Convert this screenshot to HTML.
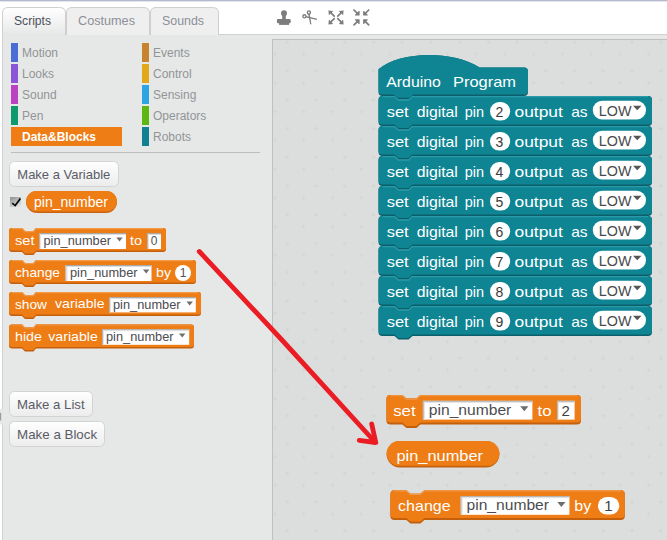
<!DOCTYPE html>
<html><head><meta charset="utf-8">
<style>
html,body{margin:0;padding:0;width:667px;height:540px;overflow:hidden;background:#fff;}
svg{display:block;font-family:"Liberation Sans",sans-serif;}
</style></head><body>
<svg width="667" height="540" viewBox="0 0 667 540">
<defs>
  <linearGradient id="tabA" x1="0" y1="0" x2="0" y2="1">
    <stop offset="0" stop-color="#ffffff"/><stop offset="1" stop-color="#e6e8e7"/>
  </linearGradient>
  <linearGradient id="chk" x1="0" y1="0" x2="0.6" y2="1">
    <stop offset="0" stop-color="#8e8e8e"/><stop offset="1" stop-color="#dedede"/>
  </linearGradient>
  <linearGradient id="btn" x1="0" y1="0" x2="0" y2="1">
    <stop offset="0" stop-color="#ffffff"/><stop offset="1" stop-color="#ececec"/>
  </linearGradient>
  <pattern id="grid" patternUnits="userSpaceOnUse" x="0" y="0" width="28.73" height="28.73">
    <g stroke="#d3d5d5" stroke-width="1" fill="none">
      <path d="M-2 13.5h4M0 11.5v4M26.73 13.5h4M28.73 11.5v4"/>
      <path d="M14.5 25.5h4M16.5 23.5v4M14.5 -3.23h4M16.5 -5.23v4"/>
    </g>
  </pattern>
</defs>

<!-- top line -->
<rect x="0" y="0" width="667" height="1" fill="#b4b9cb"/>
<rect x="0" y="1" width="667" height="1" fill="#e3e5ec"/>

<!-- palette bg -->
<rect x="2" y="34" width="665" height="506" fill="#e6e8e7"/>
<rect x="2" y="34" width="665" height="1" fill="#cfd0d1"/>
<rect x="2" y="34" width="1" height="506" fill="#cfd0d1"/>

<!-- tabs -->
<path d="M66.5 35 V13 Q66.5 7.5 72 7.5 H143.5 Q149.5 7.5 149.5 13 V35" fill="#efefef" stroke="#cfcfcf"/>
<path d="M150.5 35 V13 Q150.5 7.5 156 7.5 H212.5 Q218.5 7.5 218.5 13 V35" fill="#efefef" stroke="#cfcfcf"/>
<path d="M2.5 35 V13 Q2.5 7.5 8 7.5 H59.5 Q65.5 7.5 65.5 13 V35 Z" fill="url(#tabA)" stroke="#cfcfcf"/>
<rect x="3" y="33" width="62" height="3" fill="#e6e8e7"/>
<text x="14" y="25" font-size="12.5" fill="#4c4f5a" textLength="37" lengthAdjust="spacingAndGlyphs">Scripts</text>
<text x="78" y="25" font-size="12.5" fill="#8c909a" textLength="57" lengthAdjust="spacingAndGlyphs">Costumes</text>
<text x="162" y="25" font-size="12.5" fill="#8c909a" textLength="42" lengthAdjust="spacingAndGlyphs">Sounds</text>

<!-- toolbar icons -->
<g fill="#7d7d7d">
  <!-- stamp -->
  <circle cx="284" cy="13.3" r="3"/>
  <rect x="282.2" y="14" width="3.6" height="5.5"/>
  <rect x="276.9" y="18.9" width="13.8" height="4.4" rx="1.2"/>
  <rect x="279.1" y="22" width="10" height="2.9"/>
  <!-- scissors -->
  <g stroke="#7d7d7d" fill="none" stroke-width="1.4">
    <circle cx="308.9" cy="12.4" r="1.55"/>
    <circle cx="304.4" cy="16.3" r="1.55"/>
  </g>
  <path d="M308.1 14 L309.7 14 L311.4 24.3 L310.3 24.5 Z"/>
  <path d="M306 15.9 L306.2 17.5 L317 19.9 L317 18.8 Z"/>
  <!-- expand -->
  <path d="M328.40 10.40 L333.30 10.90 L328.90 15.30 Z"/>
  <path d="M330.90 12.90 L334.20 16.20" stroke="#7d7d7d" stroke-width="1.7" stroke-linecap="round"/>
  <path d="M328.40 24.40 L333.30 23.90 L328.90 19.50 Z"/>
  <path d="M330.90 21.90 L334.20 18.60" stroke="#7d7d7d" stroke-width="1.7" stroke-linecap="round"/>
  <path d="M343.60 10.40 L338.70 10.90 L343.10 15.30 Z"/>
  <path d="M341.10 12.90 L337.80 16.20" stroke="#7d7d7d" stroke-width="1.7" stroke-linecap="round"/>
  <path d="M343.60 24.40 L338.70 23.90 L343.10 19.50 Z"/>
  <path d="M341.10 21.90 L337.80 18.60" stroke="#7d7d7d" stroke-width="1.7" stroke-linecap="round"/>
  <path d="M359.60 15.60 L355.00 15.60 L355.00 14.80 L358.80 11.00 L359.60 11.00 Z"/>
  <path d="M357.60 13.60 L354.00 10.00" stroke="#7d7d7d" stroke-width="1.7" stroke-linecap="round"/>
  <path d="M359.60 19.30 L355.00 19.30 L355.00 20.10 L358.80 23.90 L359.60 23.90 Z"/>
  <path d="M357.60 21.30 L354.00 24.90" stroke="#7d7d7d" stroke-width="1.7" stroke-linecap="round"/>
  <path d="M363.10 15.60 L367.70 15.60 L367.70 14.80 L363.90 11.00 L363.10 11.00 Z"/>
  <path d="M365.10 13.60 L368.70 10.00" stroke="#7d7d7d" stroke-width="1.7" stroke-linecap="round"/>
  <path d="M363.10 19.30 L367.70 19.30 L367.70 20.10 L363.90 23.90 L363.10 23.90 Z"/>
  <path d="M365.10 21.30 L368.70 24.90" stroke="#7d7d7d" stroke-width="1.7" stroke-linecap="round"/>
</g>

<!-- script area -->
<rect x="272.5" y="39.5" width="400" height="510" fill="#dcdedd" stroke="#bfc1c1"/>
<rect x="273" y="40" width="394" height="500" fill="url(#grid)"/>

<!-- categories -->
<g font-size="12" fill="#929497">
  <rect x="11" y="43" width="7" height="19" fill="#4a6cd4"/>
  <rect x="11" y="64" width="7" height="19" fill="#8a55d7"/>
  <rect x="11" y="85" width="7" height="19" fill="#bb42c3"/>
  <rect x="11" y="106" width="7" height="19" fill="#0e9a6c"/>
  <rect x="11" y="127" width="111" height="19" fill="#ee7d16"/>
  <text x="22" y="57">Motion</text>
  <text x="22" y="78">Looks</text>
  <text x="22" y="99">Sound</text>
  <text x="22" y="120">Pen</text>
  <text x="22" y="141" font-weight="bold" fill="#fff">Data&amp;Blocks</text>
  <rect x="142" y="43" width="7" height="19" fill="#c88330"/>
  <rect x="142" y="64" width="7" height="19" fill="#e1a91a"/>
  <rect x="142" y="85" width="7" height="19" fill="#2ca5e2"/>
  <rect x="142" y="106" width="7" height="19" fill="#5cb712"/>
  <rect x="142" y="127" width="7" height="19" fill="#0f8191"/>
  <text x="153" y="57">Events</text>
  <text x="153" y="78">Control</text>
  <text x="153" y="99">Sensing</text>
  <text x="153" y="120">Operators</text>
  <text x="153" y="141">Robots</text>
</g>
<rect x="11" y="152" width="249" height="1" fill="#bcbdbe"/>

<!-- buttons -->
<g font-size="13.5" fill="#595c66">
  <rect x="9.5" y="161.5" width="109" height="25" rx="5" fill="url(#btn)" stroke="#d2d3d4"/>
  <text x="17.3" y="179" textLength="93" lengthAdjust="spacingAndGlyphs">Make a Variable</text>
  <rect x="9.5" y="391.5" width="83" height="25" rx="5" fill="url(#btn)" stroke="#d2d3d4"/>
  <text x="17.1" y="408.9" textLength="67.5" lengthAdjust="spacingAndGlyphs">Make a List</text>
  <rect x="9.5" y="421.5" width="95" height="25" rx="5" fill="url(#btn)" stroke="#d2d3d4"/>
  <text x="17.1" y="438.9" textLength="80" lengthAdjust="spacingAndGlyphs">Make a Block</text>
</g>
<rect x="0" y="409" width="3" height="15.5" fill="#e6e8e7"/>
<rect x="0" y="412.8" width="1.2" height="7.7" fill="#9c9d9f"/>

<!-- checkbox + reporter -->
<rect x="10" y="197" width="11" height="10" fill="url(#chk)"/>
<path d="M12.2 203.2 L15.2 205.6 L20.4 198.4" stroke="#0a0a0a" stroke-width="1.7" fill="none" stroke-linejoin="miter"/>
<rect x="26" y="191" width="91" height="22" rx="11" fill="#c8620e"/>
<rect x="26" y="191" width="91" height="20.5" rx="10.25" fill="#ee7d16"/>
<text x="34" y="206.8" font-size="14" fill="#fff" textLength="74" lengthAdjust="spacingAndGlyphs">pin_number</text>

<path d="M9,231 Q9,228 12,228 L22,228 L25,231 L33.5,231 L36,228 L163,228 Q166,228 166,231 L166,249 Q166,252 163,252 L36,252 L33.5,255 L25,255 L22,252 L12,252 Q9,252 9,249 Z" fill="#c45f0c"/>
<path d="M9,231 Q9,228 12,228 L22,228 L25,231 L33.5,231 L36,228 L163,228 Q166,228 166,231 L166,247.5 Q166,250.5 163,250.5 L36,250.5 L33.5,253.5 L25,253.5 L22,250.5 L12,250.5 Q9,250.5 9,247.5 Z" fill="#ee7d16"/>
<path d="M12,228.6 L22,228.6 L25,231.6 L33.5,231.6 L36,228.6 L163,228.6" stroke="#f29a48" stroke-width="1.1" fill="none"/>
<text x="15" y="244.6" font-size="13" fill="#fff" textLength="19.5" lengthAdjust="spacingAndGlyphs">set</text>
<rect x="39" y="233" width="87" height="16" fill="#fff"/>
<rect x="39" y="233" width="87" height="1" fill="#a9a9a9"/>
<rect x="39" y="234" width="87" height="1" fill="#dcdcdc"/>
<rect x="39" y="233" width="1" height="16" fill="#b4b4b4"/>
<rect x="40" y="234" width="1" height="15" fill="#e4e4e4"/>
<text x="43.5" y="245.225" font-size="12.5" fill="#4c4c50" textLength="67.5" lengthAdjust="spacingAndGlyphs">pin_number</text>
<path d="M116.3,237.4 H122.7 L119.5,241.5 Z" fill="#6e6e6e"/>
<text x="130" y="244.6" font-size="13" fill="#fff" textLength="12" lengthAdjust="spacingAndGlyphs">to</text>
<rect x="147" y="233" width="14" height="16" fill="#fff"/>
<rect x="147" y="233" width="14" height="1" fill="#a9a9a9"/>
<rect x="147" y="234" width="14" height="1" fill="#dcdcdc"/>
<rect x="147" y="233" width="1" height="16" fill="#b4b4b4"/>
<rect x="148" y="234" width="1" height="15" fill="#e4e4e4"/>
<text x="150.8" y="244.8" font-size="12" fill="#4f505a">0</text>
<path d="M9,263 Q9,260 12,260 L22,260 L25,263 L33.5,263 L36,260 L193,260 Q196,260 196,263 L196,281 Q196,284 193,284 L36,284 L33.5,287 L25,287 L22,284 L12,284 Q9,284 9,281 Z" fill="#c45f0c"/>
<path d="M9,263 Q9,260 12,260 L22,260 L25,263 L33.5,263 L36,260 L193,260 Q196,260 196,263 L196,279.5 Q196,282.5 193,282.5 L36,282.5 L33.5,285.5 L25,285.5 L22,282.5 L12,282.5 Q9,282.5 9,279.5 Z" fill="#ee7d16"/>
<path d="M12,260.6 L22,260.6 L25,263.6 L33.5,263.6 L36,260.6 L193,260.6" stroke="#f29a48" stroke-width="1.1" fill="none"/>
<text x="15" y="276.6" font-size="13" fill="#fff" textLength="45" lengthAdjust="spacingAndGlyphs">change</text>
<rect x="65.5" y="265" width="86" height="16" fill="#fff"/>
<rect x="65.5" y="265" width="86" height="1" fill="#a9a9a9"/>
<rect x="65.5" y="266" width="86" height="1" fill="#dcdcdc"/>
<rect x="65.5" y="265" width="1" height="16" fill="#b4b4b4"/>
<rect x="66.5" y="266" width="1" height="15" fill="#e4e4e4"/>
<text x="70" y="277.225" font-size="12.5" fill="#4c4c50" textLength="67.5" lengthAdjust="spacingAndGlyphs">pin_number</text>
<path d="M143,269.4 H149.4 L146.2,273.5 Z" fill="#6e6e6e"/>
<text x="156" y="276.6" font-size="13" fill="#fff" textLength="15" lengthAdjust="spacingAndGlyphs">by</text>
<rect x="175" y="265" width="16" height="16" rx="8" fill="#fff"/>
<text x="179.8" y="277.2" font-size="12" fill="#4f505a">1</text>
<path d="M9,295 Q9,292 12,292 L22,292 L25,295 L33.5,295 L36,292 L198,292 Q201,292 201,295 L201,313 Q201,316 198,316 L36,316 L33.5,319 L25,319 L22,316 L12,316 Q9,316 9,313 Z" fill="#c45f0c"/>
<path d="M9,295 Q9,292 12,292 L22,292 L25,295 L33.5,295 L36,292 L198,292 Q201,292 201,295 L201,311.5 Q201,314.5 198,314.5 L36,314.5 L33.5,317.5 L25,317.5 L22,314.5 L12,314.5 Q9,314.5 9,311.5 Z" fill="#ee7d16"/>
<path d="M12,292.6 L22,292.6 L25,295.6 L33.5,295.6 L36,292.6 L198,292.6" stroke="#f29a48" stroke-width="1.1" fill="none"/>
<text x="15" y="308.6" font-size="13" fill="#fff" textLength="32" lengthAdjust="spacingAndGlyphs">show</text>
<text x="55" y="308.4" font-size="13" fill="#fff" textLength="49.5" lengthAdjust="spacingAndGlyphs">variable</text>
<rect x="109" y="297" width="86.8" height="15.4" fill="#fff"/>
<rect x="109" y="297" width="86.8" height="1" fill="#a9a9a9"/>
<rect x="109" y="298" width="86.8" height="1" fill="#dcdcdc"/>
<rect x="109" y="297" width="1" height="15.4" fill="#b4b4b4"/>
<rect x="110" y="298" width="1" height="14.4" fill="#e4e4e4"/>
<text x="113" y="308.925" font-size="12.5" fill="#4c4c50" textLength="67.5" lengthAdjust="spacingAndGlyphs">pin_number</text>
<path d="M186.5,301.4 H192.9 L189.7,305.5 Z" fill="#6e6e6e"/>
<path d="M9,327.4 Q9,324.4 12,324.4 L22,324.4 L25,327.4 L33.5,327.4 L36,324.4 L191,324.4 Q194,324.4 194,327.4 L194,345.4 Q194,348.4 191,348.4 L36,348.4 L33.5,351.4 L25,351.4 L22,348.4 L12,348.4 Q9,348.4 9,345.4 Z" fill="#c45f0c"/>
<path d="M9,327.4 Q9,324.4 12,324.4 L22,324.4 L25,327.4 L33.5,327.4 L36,324.4 L191,324.4 Q194,324.4 194,327.4 L194,343.9 Q194,346.9 191,346.9 L36,346.9 L33.5,349.9 L25,349.9 L22,346.9 L12,346.9 Q9,346.9 9,343.9 Z" fill="#ee7d16"/>
<path d="M12,325.0 L22,325.0 L25,328.0 L33.5,328.0 L36,325.0 L191,325.0" stroke="#f29a48" stroke-width="1.1" fill="none"/>
<text x="15" y="340.6" font-size="13" fill="#fff" textLength="27" lengthAdjust="spacingAndGlyphs">hide</text>
<text x="48.3" y="340.6" font-size="13" fill="#fff" textLength="49.5" lengthAdjust="spacingAndGlyphs">variable</text>
<rect x="102" y="329.2" width="87.2" height="15.6" fill="#fff"/>
<rect x="102" y="329.2" width="87.2" height="1" fill="#a9a9a9"/>
<rect x="102" y="330.2" width="87.2" height="1" fill="#dcdcdc"/>
<rect x="102" y="329.2" width="1" height="15.6" fill="#b4b4b4"/>
<rect x="103" y="330.2" width="1" height="14.6" fill="#e4e4e4"/>
<text x="106" y="341.225" font-size="12.5" fill="#4c4c50" textLength="67.5" lengthAdjust="spacingAndGlyphs">pin_number</text>
<path d="M179,333.4 H185.4 L182.2,337.5 Z" fill="#6e6e6e"/>
<path d="M378.5,69.2 C400,51 452,50 479.6,67.4 L524,67.4 Q528,67.4 528,71.4 L528,92 Q528,96 524,96 L413.5,96 L409.5,99.3 L397.5,99.3 L393.5,96 L382.5,96 Q378.5,96 378.5,92 Z" fill="#0a5f6a"/>
<path d="M378.5,69.2 C400,51 452,50 479.6,67.4 L524,67.4 Q528,67.4 528,71.4 L528,90.5 Q528,94.5 524,94.5 L413.5,94.5 L409.5,97.8 L397.5,97.8 L393.5,94.5 L382.5,94.5 Q378.5,94.5 378.5,90.5 Z" fill="#0f8594"/>
<text x="386.3" y="86.8" font-size="15" fill="#fff" textLength="54.5" lengthAdjust="spacingAndGlyphs">Arduino</text>
<text x="453" y="86.8" font-size="15" fill="#fff" textLength="63" lengthAdjust="spacingAndGlyphs">Program</text>
<path d="M378.5,100 Q378.5,96 382.5,96 L394.5,96 L398.5,99.5 L408.5,99.5 L412.5,96 L648.0,96 Q652.0,96 652.0,100 L652.0,122 Q652.0,126 648.0,126 L412.5,126 L408.5,129.5 L398.5,129.5 L394.5,126 L382.5,126 Q378.5,126 378.5,122 Z" fill="#0a5f6a"/>
<path d="M378.5,100 Q378.5,96 382.5,96 L394.5,96 L398.5,99.5 L408.5,99.5 L412.5,96 L648.0,96 Q652.0,96 652.0,100 L652.0,120.5 Q652.0,124.5 648.0,124.5 L412.5,124.5 L408.5,128.0 L398.5,128.0 L394.5,124.5 L382.5,124.5 Q378.5,124.5 378.5,120.5 Z" fill="#0f8594"/>
<path d="M382.5,96.6 L394.5,96.6 L398.5,100.1 L408.5,100.1 L412.5,96.6 L648.0,96.6" stroke="#2b9aa8" stroke-width="1.1" fill="none"/>
<path d="M378.5,130 Q378.5,126 382.5,126 L394.5,126 L398.5,129.5 L408.5,129.5 L412.5,126 L648.0,126 Q652.0,126 652.0,130 L652.0,152 Q652.0,156 648.0,156 L412.5,156 L408.5,159.5 L398.5,159.5 L394.5,156 L382.5,156 Q378.5,156 378.5,152 Z" fill="#0a5f6a"/>
<path d="M378.5,130 Q378.5,126 382.5,126 L394.5,126 L398.5,129.5 L408.5,129.5 L412.5,126 L648.0,126 Q652.0,126 652.0,130 L652.0,150.5 Q652.0,154.5 648.0,154.5 L412.5,154.5 L408.5,158.0 L398.5,158.0 L394.5,154.5 L382.5,154.5 Q378.5,154.5 378.5,150.5 Z" fill="#0f8594"/>
<path d="M382.5,126.6 L394.5,126.6 L398.5,130.1 L408.5,130.1 L412.5,126.6 L648.0,126.6" stroke="#2b9aa8" stroke-width="1.1" fill="none"/>
<path d="M378.5,160 Q378.5,156 382.5,156 L394.5,156 L398.5,159.5 L408.5,159.5 L412.5,156 L648.0,156 Q652.0,156 652.0,160 L652.0,182 Q652.0,186 648.0,186 L412.5,186 L408.5,189.5 L398.5,189.5 L394.5,186 L382.5,186 Q378.5,186 378.5,182 Z" fill="#0a5f6a"/>
<path d="M378.5,160 Q378.5,156 382.5,156 L394.5,156 L398.5,159.5 L408.5,159.5 L412.5,156 L648.0,156 Q652.0,156 652.0,160 L652.0,180.5 Q652.0,184.5 648.0,184.5 L412.5,184.5 L408.5,188.0 L398.5,188.0 L394.5,184.5 L382.5,184.5 Q378.5,184.5 378.5,180.5 Z" fill="#0f8594"/>
<path d="M382.5,156.6 L394.5,156.6 L398.5,160.1 L408.5,160.1 L412.5,156.6 L648.0,156.6" stroke="#2b9aa8" stroke-width="1.1" fill="none"/>
<path d="M378.5,190 Q378.5,186 382.5,186 L394.5,186 L398.5,189.5 L408.5,189.5 L412.5,186 L648.0,186 Q652.0,186 652.0,190 L652.0,212 Q652.0,216 648.0,216 L412.5,216 L408.5,219.5 L398.5,219.5 L394.5,216 L382.5,216 Q378.5,216 378.5,212 Z" fill="#0a5f6a"/>
<path d="M378.5,190 Q378.5,186 382.5,186 L394.5,186 L398.5,189.5 L408.5,189.5 L412.5,186 L648.0,186 Q652.0,186 652.0,190 L652.0,210.5 Q652.0,214.5 648.0,214.5 L412.5,214.5 L408.5,218.0 L398.5,218.0 L394.5,214.5 L382.5,214.5 Q378.5,214.5 378.5,210.5 Z" fill="#0f8594"/>
<path d="M382.5,186.6 L394.5,186.6 L398.5,190.1 L408.5,190.1 L412.5,186.6 L648.0,186.6" stroke="#2b9aa8" stroke-width="1.1" fill="none"/>
<path d="M378.5,220 Q378.5,216 382.5,216 L394.5,216 L398.5,219.5 L408.5,219.5 L412.5,216 L648.0,216 Q652.0,216 652.0,220 L652.0,242 Q652.0,246 648.0,246 L412.5,246 L408.5,249.5 L398.5,249.5 L394.5,246 L382.5,246 Q378.5,246 378.5,242 Z" fill="#0a5f6a"/>
<path d="M378.5,220 Q378.5,216 382.5,216 L394.5,216 L398.5,219.5 L408.5,219.5 L412.5,216 L648.0,216 Q652.0,216 652.0,220 L652.0,240.5 Q652.0,244.5 648.0,244.5 L412.5,244.5 L408.5,248.0 L398.5,248.0 L394.5,244.5 L382.5,244.5 Q378.5,244.5 378.5,240.5 Z" fill="#0f8594"/>
<path d="M382.5,216.6 L394.5,216.6 L398.5,220.1 L408.5,220.1 L412.5,216.6 L648.0,216.6" stroke="#2b9aa8" stroke-width="1.1" fill="none"/>
<path d="M378.5,250 Q378.5,246 382.5,246 L394.5,246 L398.5,249.5 L408.5,249.5 L412.5,246 L648.0,246 Q652.0,246 652.0,250 L652.0,272 Q652.0,276 648.0,276 L412.5,276 L408.5,279.5 L398.5,279.5 L394.5,276 L382.5,276 Q378.5,276 378.5,272 Z" fill="#0a5f6a"/>
<path d="M378.5,250 Q378.5,246 382.5,246 L394.5,246 L398.5,249.5 L408.5,249.5 L412.5,246 L648.0,246 Q652.0,246 652.0,250 L652.0,270.5 Q652.0,274.5 648.0,274.5 L412.5,274.5 L408.5,278.0 L398.5,278.0 L394.5,274.5 L382.5,274.5 Q378.5,274.5 378.5,270.5 Z" fill="#0f8594"/>
<path d="M382.5,246.6 L394.5,246.6 L398.5,250.1 L408.5,250.1 L412.5,246.6 L648.0,246.6" stroke="#2b9aa8" stroke-width="1.1" fill="none"/>
<path d="M378.5,280 Q378.5,276 382.5,276 L394.5,276 L398.5,279.5 L408.5,279.5 L412.5,276 L648.0,276 Q652.0,276 652.0,280 L652.0,302 Q652.0,306 648.0,306 L412.5,306 L408.5,309.5 L398.5,309.5 L394.5,306 L382.5,306 Q378.5,306 378.5,302 Z" fill="#0a5f6a"/>
<path d="M378.5,280 Q378.5,276 382.5,276 L394.5,276 L398.5,279.5 L408.5,279.5 L412.5,276 L648.0,276 Q652.0,276 652.0,280 L652.0,300.5 Q652.0,304.5 648.0,304.5 L412.5,304.5 L408.5,308.0 L398.5,308.0 L394.5,304.5 L382.5,304.5 Q378.5,304.5 378.5,300.5 Z" fill="#0f8594"/>
<path d="M382.5,276.6 L394.5,276.6 L398.5,280.1 L408.5,280.1 L412.5,276.6 L648.0,276.6" stroke="#2b9aa8" stroke-width="1.1" fill="none"/>
<path d="M378.5,310 Q378.5,306 382.5,306 L394.5,306 L398.5,309.5 L408.5,309.5 L412.5,306 L648.0,306 Q652.0,306 652.0,310 L652.0,332 Q652.0,336 648.0,336 L412.5,336 L408.5,339.5 L398.5,339.5 L394.5,336 L382.5,336 Q378.5,336 378.5,332 Z" fill="#0a5f6a"/>
<path d="M378.5,310 Q378.5,306 382.5,306 L394.5,306 L398.5,309.5 L408.5,309.5 L412.5,306 L648.0,306 Q652.0,306 652.0,310 L652.0,330.5 Q652.0,334.5 648.0,334.5 L412.5,334.5 L408.5,338.0 L398.5,338.0 L394.5,334.5 L382.5,334.5 Q378.5,334.5 378.5,330.5 Z" fill="#0f8594"/>
<path d="M382.5,306.6 L394.5,306.6 L398.5,310.1 L408.5,310.1 L412.5,306.6 L648.0,306.6" stroke="#2b9aa8" stroke-width="1.1" fill="none"/>
<text x="386.7" y="116.6" font-size="15" fill="#fff" textLength="22" lengthAdjust="spacingAndGlyphs">set</text>
<text x="416.7" y="116.6" font-size="15" fill="#fff" textLength="41.2" lengthAdjust="spacingAndGlyphs">digital</text>
<text x="464.7" y="116.6" font-size="15" fill="#fff" textLength="19.3" lengthAdjust="spacingAndGlyphs">pin</text>
<rect x="490" y="102.1" width="20.2" height="18.5" rx="9.25" fill="#fff"/>
<text x="495.5" y="116.5" font-size="14" fill="#3a3a3a">2</text>
<text x="514.5" y="116.6" font-size="15" fill="#fff" textLength="48.3" lengthAdjust="spacingAndGlyphs">output</text>
<text x="571.2" y="116.6" font-size="15" fill="#fff" textLength="16.4" lengthAdjust="spacingAndGlyphs">as</text>
<rect x="592.8" y="100.8" width="53.2" height="18.6" rx="9.3" fill="#fff"/>
<text x="598.8" y="116.1" font-size="14.5" fill="#4a4a4a" textLength="32.6" lengthAdjust="spacingAndGlyphs">LOW</text>
<path d="M633,105.8 H641.5 L637.25,110.3 Z" fill="#555"/>
<text x="386.7" y="146.6" font-size="15" fill="#fff" textLength="22" lengthAdjust="spacingAndGlyphs">set</text>
<text x="416.7" y="146.6" font-size="15" fill="#fff" textLength="41.2" lengthAdjust="spacingAndGlyphs">digital</text>
<text x="464.7" y="146.6" font-size="15" fill="#fff" textLength="19.3" lengthAdjust="spacingAndGlyphs">pin</text>
<rect x="490" y="132.1" width="20.2" height="18.5" rx="9.25" fill="#fff"/>
<text x="495.5" y="146.5" font-size="14" fill="#3a3a3a">3</text>
<text x="514.5" y="146.6" font-size="15" fill="#fff" textLength="48.3" lengthAdjust="spacingAndGlyphs">output</text>
<text x="571.2" y="146.6" font-size="15" fill="#fff" textLength="16.4" lengthAdjust="spacingAndGlyphs">as</text>
<rect x="592.8" y="130.8" width="53.2" height="18.6" rx="9.3" fill="#fff"/>
<text x="598.8" y="146.1" font-size="14.5" fill="#4a4a4a" textLength="32.6" lengthAdjust="spacingAndGlyphs">LOW</text>
<path d="M633,135.8 H641.5 L637.25,140.3 Z" fill="#555"/>
<text x="386.7" y="176.6" font-size="15" fill="#fff" textLength="22" lengthAdjust="spacingAndGlyphs">set</text>
<text x="416.7" y="176.6" font-size="15" fill="#fff" textLength="41.2" lengthAdjust="spacingAndGlyphs">digital</text>
<text x="464.7" y="176.6" font-size="15" fill="#fff" textLength="19.3" lengthAdjust="spacingAndGlyphs">pin</text>
<rect x="490" y="162.1" width="20.2" height="18.5" rx="9.25" fill="#fff"/>
<text x="495.5" y="176.5" font-size="14" fill="#3a3a3a">4</text>
<text x="514.5" y="176.6" font-size="15" fill="#fff" textLength="48.3" lengthAdjust="spacingAndGlyphs">output</text>
<text x="571.2" y="176.6" font-size="15" fill="#fff" textLength="16.4" lengthAdjust="spacingAndGlyphs">as</text>
<rect x="592.8" y="160.8" width="53.2" height="18.6" rx="9.3" fill="#fff"/>
<text x="598.8" y="176.1" font-size="14.5" fill="#4a4a4a" textLength="32.6" lengthAdjust="spacingAndGlyphs">LOW</text>
<path d="M633,165.8 H641.5 L637.25,170.3 Z" fill="#555"/>
<text x="386.7" y="206.6" font-size="15" fill="#fff" textLength="22" lengthAdjust="spacingAndGlyphs">set</text>
<text x="416.7" y="206.6" font-size="15" fill="#fff" textLength="41.2" lengthAdjust="spacingAndGlyphs">digital</text>
<text x="464.7" y="206.6" font-size="15" fill="#fff" textLength="19.3" lengthAdjust="spacingAndGlyphs">pin</text>
<rect x="490" y="192.1" width="20.2" height="18.5" rx="9.25" fill="#fff"/>
<text x="495.5" y="206.5" font-size="14" fill="#3a3a3a">5</text>
<text x="514.5" y="206.6" font-size="15" fill="#fff" textLength="48.3" lengthAdjust="spacingAndGlyphs">output</text>
<text x="571.2" y="206.6" font-size="15" fill="#fff" textLength="16.4" lengthAdjust="spacingAndGlyphs">as</text>
<rect x="592.8" y="190.8" width="53.2" height="18.6" rx="9.3" fill="#fff"/>
<text x="598.8" y="206.1" font-size="14.5" fill="#4a4a4a" textLength="32.6" lengthAdjust="spacingAndGlyphs">LOW</text>
<path d="M633,195.8 H641.5 L637.25,200.3 Z" fill="#555"/>
<text x="386.7" y="236.6" font-size="15" fill="#fff" textLength="22" lengthAdjust="spacingAndGlyphs">set</text>
<text x="416.7" y="236.6" font-size="15" fill="#fff" textLength="41.2" lengthAdjust="spacingAndGlyphs">digital</text>
<text x="464.7" y="236.6" font-size="15" fill="#fff" textLength="19.3" lengthAdjust="spacingAndGlyphs">pin</text>
<rect x="490" y="222.1" width="20.2" height="18.5" rx="9.25" fill="#fff"/>
<text x="495.5" y="236.5" font-size="14" fill="#3a3a3a">6</text>
<text x="514.5" y="236.6" font-size="15" fill="#fff" textLength="48.3" lengthAdjust="spacingAndGlyphs">output</text>
<text x="571.2" y="236.6" font-size="15" fill="#fff" textLength="16.4" lengthAdjust="spacingAndGlyphs">as</text>
<rect x="592.8" y="220.8" width="53.2" height="18.6" rx="9.3" fill="#fff"/>
<text x="598.8" y="236.1" font-size="14.5" fill="#4a4a4a" textLength="32.6" lengthAdjust="spacingAndGlyphs">LOW</text>
<path d="M633,225.8 H641.5 L637.25,230.3 Z" fill="#555"/>
<text x="386.7" y="266.6" font-size="15" fill="#fff" textLength="22" lengthAdjust="spacingAndGlyphs">set</text>
<text x="416.7" y="266.6" font-size="15" fill="#fff" textLength="41.2" lengthAdjust="spacingAndGlyphs">digital</text>
<text x="464.7" y="266.6" font-size="15" fill="#fff" textLength="19.3" lengthAdjust="spacingAndGlyphs">pin</text>
<rect x="490" y="252.1" width="20.2" height="18.5" rx="9.25" fill="#fff"/>
<text x="495.5" y="266.5" font-size="14" fill="#3a3a3a">7</text>
<text x="514.5" y="266.6" font-size="15" fill="#fff" textLength="48.3" lengthAdjust="spacingAndGlyphs">output</text>
<text x="571.2" y="266.6" font-size="15" fill="#fff" textLength="16.4" lengthAdjust="spacingAndGlyphs">as</text>
<rect x="592.8" y="250.8" width="53.2" height="18.6" rx="9.3" fill="#fff"/>
<text x="598.8" y="266.1" font-size="14.5" fill="#4a4a4a" textLength="32.6" lengthAdjust="spacingAndGlyphs">LOW</text>
<path d="M633,255.8 H641.5 L637.25,260.3 Z" fill="#555"/>
<text x="386.7" y="296.6" font-size="15" fill="#fff" textLength="22" lengthAdjust="spacingAndGlyphs">set</text>
<text x="416.7" y="296.6" font-size="15" fill="#fff" textLength="41.2" lengthAdjust="spacingAndGlyphs">digital</text>
<text x="464.7" y="296.6" font-size="15" fill="#fff" textLength="19.3" lengthAdjust="spacingAndGlyphs">pin</text>
<rect x="490" y="282.1" width="20.2" height="18.5" rx="9.25" fill="#fff"/>
<text x="495.5" y="296.5" font-size="14" fill="#3a3a3a">8</text>
<text x="514.5" y="296.6" font-size="15" fill="#fff" textLength="48.3" lengthAdjust="spacingAndGlyphs">output</text>
<text x="571.2" y="296.6" font-size="15" fill="#fff" textLength="16.4" lengthAdjust="spacingAndGlyphs">as</text>
<rect x="592.8" y="280.8" width="53.2" height="18.6" rx="9.3" fill="#fff"/>
<text x="598.8" y="296.1" font-size="14.5" fill="#4a4a4a" textLength="32.6" lengthAdjust="spacingAndGlyphs">LOW</text>
<path d="M633,285.8 H641.5 L637.25,290.3 Z" fill="#555"/>
<text x="386.7" y="326.6" font-size="15" fill="#fff" textLength="22" lengthAdjust="spacingAndGlyphs">set</text>
<text x="416.7" y="326.6" font-size="15" fill="#fff" textLength="41.2" lengthAdjust="spacingAndGlyphs">digital</text>
<text x="464.7" y="326.6" font-size="15" fill="#fff" textLength="19.3" lengthAdjust="spacingAndGlyphs">pin</text>
<rect x="490" y="312.1" width="20.2" height="18.5" rx="9.25" fill="#fff"/>
<text x="495.5" y="326.5" font-size="14" fill="#3a3a3a">9</text>
<text x="514.5" y="326.6" font-size="15" fill="#fff" textLength="48.3" lengthAdjust="spacingAndGlyphs">output</text>
<text x="571.2" y="326.6" font-size="15" fill="#fff" textLength="16.4" lengthAdjust="spacingAndGlyphs">as</text>
<rect x="592.8" y="310.8" width="53.2" height="18.6" rx="9.3" fill="#fff"/>
<text x="598.8" y="326.1" font-size="14.5" fill="#4a4a4a" textLength="32.6" lengthAdjust="spacingAndGlyphs">LOW</text>
<path d="M633,315.8 H641.5 L637.25,320.3 Z" fill="#555"/>
<path d="M386.4,399.1 Q386.4,395.1 390.4,395.1 L402.4,395.1 L406.4,398.6 L416.4,398.6 L420.4,395.1 L577.0,395.1 Q581.0,395.1 581.0,399.1 L581.0,420.5 Q581.0,424.5 577.0,424.5 L420.4,424.5 L416.4,428.0 L406.4,428.0 L402.4,424.5 L390.4,424.5 Q386.4,424.5 386.4,420.5 Z" fill="#c45f0c"/>
<path d="M386.4,399.1 Q386.4,395.1 390.4,395.1 L402.4,395.1 L406.4,398.6 L416.4,398.6 L420.4,395.1 L577.0,395.1 Q581.0,395.1 581.0,399.1 L581.0,418.5 Q581.0,422.5 577.0,422.5 L420.4,422.5 L416.4,426.0 L406.4,426.0 L402.4,422.5 L390.4,422.5 Q386.4,422.5 386.4,418.5 Z" fill="#ee7d16"/>
<path d="M390.4,395.70000000000005 L402.4,395.70000000000005 L406.4,399.20000000000005 L416.4,399.20000000000005 L420.4,395.70000000000005 L577.0,395.70000000000005" stroke="#f29a48" stroke-width="1.1" fill="none"/>
<text x="393.2" y="415.5" font-size="15" fill="#fff" textLength="22.4" lengthAdjust="spacingAndGlyphs">set</text>
<rect x="422.9" y="400.8" width="109.5" height="18.8" fill="#fff"/>
<rect x="422.9" y="400.8" width="109.5" height="1" fill="#a9a9a9"/>
<rect x="422.9" y="401.8" width="109.5" height="1" fill="#dcdcdc"/>
<rect x="422.9" y="400.8" width="1" height="18.8" fill="#b4b4b4"/>
<rect x="423.9" y="401.8" width="1" height="17.8" fill="#e4e4e4"/>
<text x="428.8" y="414.55" font-size="15" fill="#4c4c50" textLength="82.5" lengthAdjust="spacingAndGlyphs">pin_number</text>
<path d="M520.2,406.3 H528.4 L524.3,411.3 Z" fill="#6e6e6e"/>
<text x="537.6" y="415.6" font-size="15" fill="#fff" textLength="14" lengthAdjust="spacingAndGlyphs">to</text>
<rect x="557.1" y="400.8" width="17.5" height="18.8" fill="#fff"/>
<rect x="557.1" y="400.8" width="17.5" height="1" fill="#a9a9a9"/>
<rect x="557.1" y="401.8" width="17.5" height="1" fill="#dcdcdc"/>
<rect x="557.1" y="400.8" width="1" height="18.8" fill="#b4b4b4"/>
<rect x="558.1" y="401.8" width="1" height="17.8" fill="#e4e4e4"/>
<text x="561.5" y="415.6" font-size="15" fill="#404040">2</text>
<rect x="386.6" y="441" width="112.8" height="26.5" rx="13.25" fill="#c45f0c"/>
<rect x="386.6" y="441" width="112.8" height="24.8" rx="12.4" fill="#ee7d16"/>
<text x="396.5" y="461" font-size="15" fill="#fff" textLength="86.5" lengthAdjust="spacingAndGlyphs">pin_number</text>
<path d="M390.4,494.3 Q390.4,490.3 394.4,490.3 L406.4,490.3 L410.4,493.8 L420.4,493.8 L424.4,490.3 L620.8,490.3 Q624.8,490.3 624.8,494.3 L624.8,515.9 Q624.8,519.9 620.8,519.9 L424.4,519.9 L420.4,523.4 L410.4,523.4 L406.4,519.9 L394.4,519.9 Q390.4,519.9 390.4,515.9 Z" fill="#c45f0c"/>
<path d="M390.4,494.3 Q390.4,490.3 394.4,490.3 L406.4,490.3 L410.4,493.8 L420.4,493.8 L424.4,490.3 L620.8,490.3 Q624.8,490.3 624.8,494.3 L624.8,513.9 Q624.8,517.9 620.8,517.9 L424.4,517.9 L420.4,521.4 L410.4,521.4 L406.4,517.9 L394.4,517.9 Q390.4,517.9 390.4,513.9 Z" fill="#ee7d16"/>
<path d="M394.4,490.90000000000003 L406.4,490.90000000000003 L410.4,494.40000000000003 L420.4,494.40000000000003 L424.4,490.90000000000003 L620.8,490.90000000000003" stroke="#f29a48" stroke-width="1.1" fill="none"/>
<text x="398.1" y="510.5" font-size="15" fill="#fff" textLength="52.5" lengthAdjust="spacingAndGlyphs">change</text>
<rect x="460.7" y="496.2" width="108.7" height="18.6" fill="#fff"/>
<rect x="460.7" y="496.2" width="108.7" height="1" fill="#a9a9a9"/>
<rect x="460.7" y="497.2" width="108.7" height="1" fill="#dcdcdc"/>
<rect x="460.7" y="496.2" width="1" height="18.6" fill="#b4b4b4"/>
<rect x="461.7" y="497.2" width="1" height="17.6" fill="#e4e4e4"/>
<text x="466.5" y="509.85" font-size="15" fill="#4c4c50" textLength="82.5" lengthAdjust="spacingAndGlyphs">pin_number</text>
<path d="M557.3,502 H565.5 L561.4,507 Z" fill="#6e6e6e"/>
<text x="574.3" y="510.5" font-size="15" fill="#fff" textLength="17" lengthAdjust="spacingAndGlyphs">by</text>
<rect x="597.9" y="496.9" width="21.4" height="17.6" rx="8.8" fill="#fff"/>
<text x="604.2" y="511" font-size="15" fill="#404040">1</text>
<g stroke="#ea1c24" stroke-width="4.8" stroke-linecap="round" stroke-linejoin="round" fill="none">
<path d="M199.3,251.5 L281.5,339.5 L375,442"/>
<path d="M371.7,424 L375.8,442.5 L359.2,440.3"/>
</g>
</svg>
</body></html>
